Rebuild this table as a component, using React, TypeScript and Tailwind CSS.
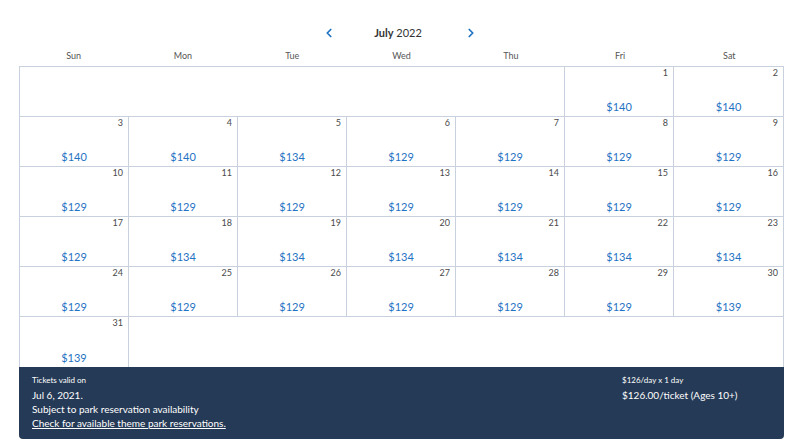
import { ChevronLeft, ChevronRight } from "lucide-react";

const days = ["Sun", "Mon", "Tue", "Wed", "Thu", "Fri", "Sat"];

const prices: Record<number, number> = {
  1: 140, 2: 140, 3: 140, 4: 140, 5: 134, 6: 129, 7: 129, 8: 129, 9: 129,
  10: 129, 11: 129, 12: 129, 13: 129, 14: 129, 15: 129, 16: 129,
  17: 129, 18: 134, 19: 134, 20: 134, 21: 134, 22: 134, 23: 134,
  24: 129, 25: 129, 26: 129, 27: 129, 28: 129, 29: 129, 30: 139, 31: 139,
};

// Saturday cells sit against the outer border, so they drop their own right border
function DayCell({ day, sat }: { day: number; sat?: boolean }) {
  return (
    <div
      className={
        sat
          ? "h-[50px] border-b border-[#c9d1de] flex flex-col justify-between"
          : "h-[50px] border-r border-b border-[#c9d1de] flex flex-col justify-between"
      }
    >
      <div className="text-right pr-[5px] text-[9px] text-[#4a4a4a] leading-[12px]">{day}</div>
      <div className="text-center text-[11px] text-[#1f73c3] leading-[14px] pb-[2px]">${prices[day]}</div>
    </div>
  );
}

export default function App() {
  const rest = Array.from({ length: 28 }, (_, i) => i + 3);
  return (
    <div className="w-[800px] h-[447px] bg-white pt-[25px] font-['Lato',sans-serif]">
      <div className="flex items-center justify-center h-[16px]">
        <ChevronLeft size={14} strokeWidth={3} className="text-[#1f73c3] mr-[27px]" />
        <div className="text-[11px] text-[#333] w-[70px] text-center">
          <span className="font-bold">July</span> 2022
        </div>
        <ChevronRight size={14} strokeWidth={3} className="text-[#1f73c3] ml-[31px]" />
      </div>
      <div className="ml-[19px] w-[765px]">
        <div className="grid grid-cols-7 h-[25px] pt-[9px]">
          {days.map((d) => (
            <div key={d} className="text-center text-[9px] leading-[12px] text-[#555]">{d}</div>
          ))}
        </div>
        <div className="border border-[#c9d1de] border-b-0 grid grid-cols-7">
          <div className="col-span-5 h-[50px] border-r border-b border-[#c9d1de]" />
          <DayCell day={1} />
          <DayCell day={2} sat />
          {rest.map((d) => (
            <DayCell key={d} day={d} sat={d % 7 === 2} />
          ))}
          <div className="h-[50px] border-r border-[#c9d1de] flex flex-col justify-between">
            <div className="text-right pr-[5px] text-[9px] text-[#4a4a4a] leading-[12px]">31</div>
            <div className="text-center text-[11px] text-[#1f73c3] leading-[14px] pb-[2px]">$139</div>
          </div>
          <div className="col-span-6 h-[50px]" />
        </div>
        <div className="bg-[#253a56] h-[72px] rounded-b-[4px] flex text-white px-[13px] pt-[8px]">
          <div className="w-[590px]">
            <div className="text-[8px] leading-[10px]">Tickets valid on</div>
            <div className="text-[10px] leading-[14px] mt-[3px]">Jul 6, 2021.</div>
            <div className="text-[10px] leading-[14px]">Subject to park reservation availability</div>
            <div className="text-[10px] leading-[14px] underline">Check for available theme park reservations.</div>
          </div>
          <div>
            <div className="text-[8px] leading-[10px]">$126/day x 1 day</div>
            <div className="text-[10px] leading-[14px] mt-[3px]">$126.00/ticket (Ages 10+)</div>
          </div>
        </div>
      </div>
    </div>
  );
}
